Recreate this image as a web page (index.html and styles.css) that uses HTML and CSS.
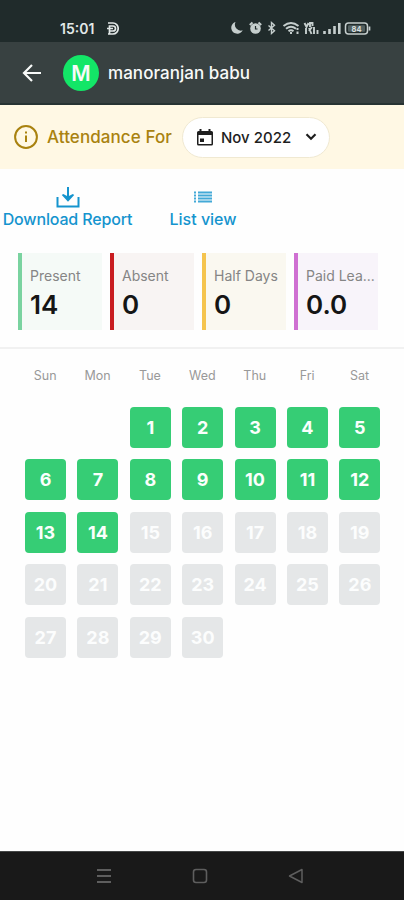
FILE: index.html
```
<!DOCTYPE html>
<html lang="en">
<head>
<meta charset="utf-8">
<title>Attendance</title>
<link rel="stylesheet" href="styles.css">
</head>
<body>
<div class="status">
  <span class="time">15:01</span>
  <svg class="brand" width="12" height="13" viewBox="0 0 12 13" fill="none" stroke="currentColor" stroke-width="1.700"><path d="M1 1H6A5.200 5.500 0 0 1 6 12H1M2.500 12V4H6A2.500 2.500 0 0 1 6 9H2.500M0 6.500H6"/></svg>
  <svg class="indicators" width="142" height="16" viewBox="0 0 142 16" fill="none" stroke="currentColor">
    <path fill="currentColor" stroke="none" d="M4.500 2A6 6 0 1 0 11.700 10.300A6 6 0 0 1 4.500 2Z"/>
    <circle cx="24.500" cy="8.500" r="5.300" fill="currentColor" stroke="none"/><path d="M18.800 5L21.500 2.500M30.200 5L27.500 2.500" stroke-width="2"/><path d="M24.500 6V9H26.500" stroke="#202b2b" stroke-width="1.200"/>
    <path d="M37.500 5.500L43.500 10.800L40.500 13.500V2.500L43.500 5.200L37.500 10.500" stroke-width="1.400"/>
    <path d="M52.500 6Q60 0 67.500 6M55 8.800Q60 4.800 65 8.800M57.500 11.300Q60 9.300 62.500 11.300" stroke-width="2"/><path d="M60 12V14M66.500 8V10M66.500 11.500V14" stroke-width="2"/>
    <path d="M73.500 3L75.500 7L77.500 3M79 7V3H81.500V6M75 8V14M78 8L80.500 14M81 7L78 11M83 7V14M86.500 10V14" stroke-width="1.900"/>
    <path d="M93.500 11V14M98.500 9V14M103.500 6V14M108.300 3V14" stroke-width="2.600"/>
    <rect x="114.500" y="3" width="22" height="11" rx="3" stroke-width="1.500"/><path d="M138.500 6.500V10.500" stroke-width="1.700"/>
    <rect x="117" y="5.300" width="17" height="6.500" rx="1" fill="#526060" stroke="none"/>
    <text class="charge" x="125.500" y="11.500" text-anchor="middle">84</text>
  </svg>
</div>
<header class="appbar">
  <svg class="back" width="20" height="20" viewBox="0 0 20 20" fill="none" stroke="currentColor" stroke-width="2.200"><path d="M19 10H2M10 2L2 10L10 18"/></svg>
  <span class="avatar">M</span>
  <span class="name">manoranjan babu</span>
</header>
<section class="period">
  <svg class="info" width="24" height="24" viewBox="0 0 24 24" fill="none" stroke="currentColor" stroke-width="2"><circle cx="12" cy="12" r="10.900"/><path d="M12 10.500V17M12 6.500V8.500"/></svg>
  <span class="for">Attendance For</span>
  <div class="picker">
    <svg width="16" height="17" viewBox="0 0 16 17"><path fill="currentColor" fill-rule="evenodd" d="M2.500 0H4.500V2H11.500V0H13.500V2H14.500Q16 2 16 3.500V15Q16 16.500 14.500 16.500H1.500Q0 16.500 0 15V3.500Q0 2 1.500 2H2.500ZM1.500 6V15H14.500V6Z"/><rect x="3" y="9.500" width="4" height="3.500" fill="currentColor"/></svg>
    <span class="month">Nov 2022</span>
    <svg width="12" height="8" viewBox="0 0 12 8" fill="none" stroke="currentColor" stroke-width="2.200"><path d="M1.500 1.200L6 5.700L10.500 1.200"/></svg>
  </div>
</section>
<nav class="actions">
  <div class="action">
    <svg width="24" height="22" viewBox="0 0 24 22" fill="none" stroke="currentColor" stroke-width="2"><path d="M1.500 11V20.500H22.500V11M12 1V14"/><path fill="currentColor" stroke="none" d="M5.800 9L12 15.700L18.200 9L16.800 8L12 10.500L7.200 8Z"/></svg>
    <span class="download">Download Report</span>
  </div>
  <div class="action list">
    <svg width="18" height="22" viewBox="0 0 18 22" stroke="currentColor" opacity=".8"><path stroke-width="1.800" d="M0 6.500H2M0 9.500H2M0 12.500H2M0 15.500H2M4 6.500H18M4 9.500H18M4 12.500H18M4 15.500H18"/></svg>
    <span class="view">List view</span>
  </div>
</nav>
<section class="stats">
  <div class="stat present"><span class="label">Present</span><b>14</b></div>
  <div class="stat absent"><span class="label">Absent</span><b>0</b></div>
  <div class="stat half"><span class="label">Half Days</span><b>0</b></div>
  <div class="stat leave"><span class="label">Paid Lea...</span><b>0.0</b></div>
</section>
<div class="week"><span>Sun</span><span>Mon</span><span>Tue</span><span>Wed</span><span>Thu</span><span>Fri</span><span>Sat</span></div>
<main class="days">
  <i class="first">1</i><i>2</i><i>3</i><i>4</i><i>5</i>
  <i>6</i><i>7</i><i>8</i><i>9</i><i>10</i><i>11</i><i>12</i>
  <i>13</i><i>14</i><i class="off">15</i><i class="off">16</i><i class="off">17</i><i class="off">18</i><i class="off">19</i>
  <i class="off">20</i><i class="off">21</i><i class="off">22</i><i class="off">23</i><i class="off">24</i><i class="off">25</i><i class="off">26</i>
  <i class="off">27</i><i class="off">28</i><i class="off">29</i><i class="off">30</i>
</main>
<footer class="system">
  <svg width="16" height="16" viewBox="0 0 16 16" stroke="currentColor" stroke-width="1.800"><path d="M1 2H15M1 8H15M1 14H15"/></svg>
  <svg width="16" height="16" viewBox="0 0 16 16" fill="none" stroke="currentColor" stroke-width="1.600"><rect x="1.500" y="1.500" width="13" height="13" rx="2.500"/></svg>
  <svg width="16" height="16" viewBox="0 0 16 16" fill="none" stroke="currentColor" stroke-width="1.500" stroke-linejoin="round"><path d="M1.500 8L14 1.500V14.500Z"/></svg>
</footer>
</body>
</html>
```
FILE: styles.css
```
* { box-sizing: border-box; }
body { margin: 0; width: 404px; height: 900px; display: flex; flex-direction: column; overflow: hidden; background: #fefefe; font-family: Inter, sans-serif; white-space: nowrap; }
svg { display: block; flex: none; }
.status { height: 42px; flex: none; background: #202b2b; color: #e2e8e7; display: flex; align-items: center; padding: 14px 0 0 60px; }
.time { width: 47px; font-size: 14px; font-weight: 600; }
.indicators { margin-left: 112px; color: #c5cecd; }
.charge { font: 700 7.5px Inter, sans-serif; fill: #d7dedd; stroke: none; }
.appbar { height: 63px; flex: none; display: flex; align-items: center; padding: 1px 0 0 22px; background: #384141; border-bottom: 2px solid #273333; color: #f8faf9; }
.avatar { width: 36px; height: 36px; margin: 0 9px 0 21px; border-radius: 50%; background: #13e667; display: grid; place-items: center; font-size: 21px; font-weight: 600; }
.name { font-size: 17px; font-weight: 500; letter-spacing: .05px; }
.period { height: 64px; flex: none; display: flex; align-items: center; background: #fff8e4; color: #a9820f; padding-left: 14px; }
.for { width: 135px; margin-left: 9px; font-size: 17px; font-weight: 500; letter-spacing: .08px; }
.picker { width: 148px; height: 41px; display: flex; align-items: center; padding-left: 14px; background: #fff; border: 1px solid #f0e9d2; border-radius: 21px; color: #1e1e1e; }
.month { width: 84px; margin-left: 8px; font-size: 15px; font-weight: 500; }
.actions { height: 84px; flex: none; display: flex; padding: 17px 0 0 2px; color: #1594ce; font-weight: 500; font-size: 16px; }
.action { width: 131px; display: flex; flex-direction: column; align-items: center; line-height: 23px; }
.download { letter-spacing: -.15px; }
.action.list { width: 68px; margin-left: 36px; }
.stats { height: 96px; flex: none; display: flex; gap: 8px; padding-left: 18px; border-bottom: 2px solid #f1f1f1; }
.stat { width: 84px; height: 77px; padding: 13px 0 0 8px; border-left: 4px solid; }
.present { background: #f5faf7; border-color: #7ad3a0; }
.absent { background: #f8f4f3; border-color: #c91c20; }
.half { background: #faf8f0; border-color: #f5c44e; }
.leave { background: #f8f4fa; border-color: #cf70d2; }
.label { display: block; font-size: 14px; line-height: 19px; color: #858585; }
.stat b { display: block; font-size: 26px; line-height: 39px; font-weight: 600; color: #151515; }
.week { display: grid; grid-template-columns: repeat(7, 52.4px); padding: 18px 0 0 19px; height: 57px; flex: none; color: #999; font-size: 12.5px; line-height: 17px; text-align: center; }
.days { display: grid; grid-template-columns: repeat(7, 41px); grid-auto-rows: 41px; gap: 11.5px 11.4px; align-content: start; padding: .5px 0 0 25px; flex: 1; }
.days i { display: grid; place-items: center; border-radius: 4px; background: #36cd75; color: #fafffc; font-size: 18px; font-style: normal; font-weight: 700; }
.days .first { grid-column-start: 3; }
.days .off { background: #e5e7e8; color: #fcfdfd; }
.system { height: 49px; flex: none; display: flex; align-items: center; justify-content: center; gap: 80px; padding-right: 4px; background: #191919; border-top: 1px solid #454747; color: #5e5e5e; }
```
